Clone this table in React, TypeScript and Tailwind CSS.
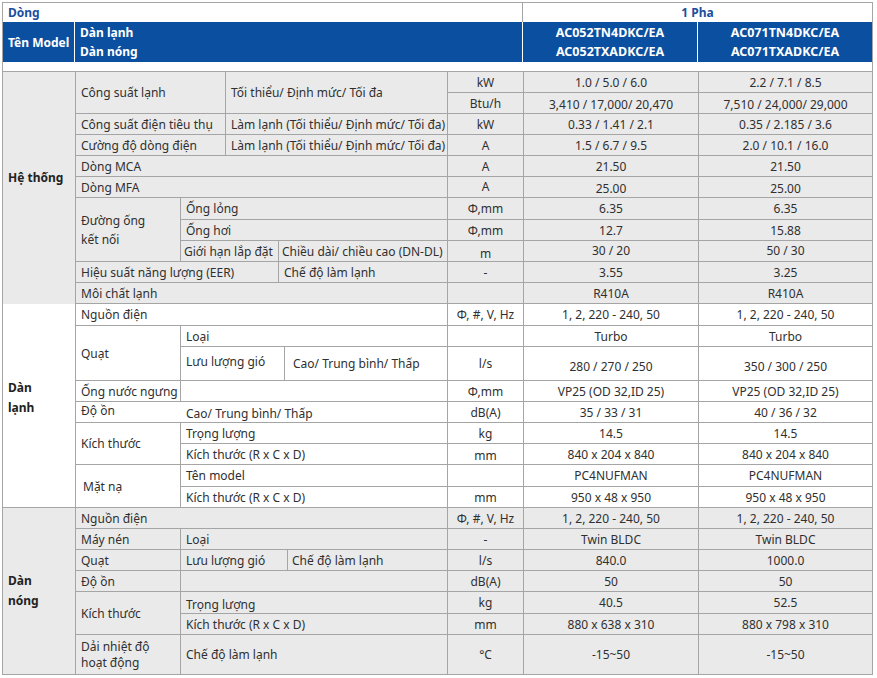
import React from "react";

type Al = "l" | "c";

function Cell({
  p,
  bg,
  a = "l",
  children,
  extra = "",
}: {
  p: string;
  bg: string;
  a?: Al;
  children?: React.ReactNode;
  extra?: string;
}) {
  return (
    <div
      className={`${p} ${bg} flex items-center ${
        a === "c" ? "justify-center text-center" : "pl-[5px] pr-[1px]"
      } ${extra} whitespace-nowrap overflow-hidden`}
    >
      {children}
    </div>
  );
}

export default function App() {
  const G = "bg-[#eaeaea]";
  const W = "bg-white";
  return (
    <div className="w-[877px] h-[678px] bg-white pt-[2px] pl-[2px] font-['Noto_Sans',sans-serif] text-[12px] leading-[15px] text-[#303030]">
      <div className="w-[871px] border border-[#a5a5a5] flex flex-col">
        {/* Dòng row */}
        <div className="flex h-[19px]">
          <div className="w-[520px] border-r border-[#a5a5a5] pl-[5px] flex items-center font-bold text-[12px] text-[#1b4f9e]">
            Dòng
          </div>
          <div className="flex-1 flex items-center justify-center font-bold text-[12px] text-[#1b4f9e]">
            1 Pha
          </div>
        </div>
        {/* Blue header */}
        <div className="flex h-[40px] bg-[#0b4fa1] text-white font-bold text-[12px] leading-[19px]">
          <div className="w-[72px] border-r border-white pl-[5px] flex items-center">Tên Model</div>
          <div className="w-[448px] border-r border-white pl-[5px] flex flex-col justify-center">
            <span>Dàn lạnh</span>
            <span>Dàn nóng</span>
          </div>
          <div className="w-[175px] border-r border-white flex flex-col justify-center items-center text-[12.5px]">
            <span>AC052TN4DKC/EA</span>
            <span>AC052TXADKC/EA</span>
          </div>
          <div className="flex-1 flex flex-col justify-center items-center text-[12.5px]">
            <span>AC071TN4DKC/EA</span>
            <span>AC071TXADKC/EA</span>
          </div>
        </div>
        {/* spacer */}
        <div className="h-[9px] bg-white" />
        {/* body grid */}
        <div className="grid gap-px bg-[#a5a5a5] border-t border-[#a5a5a5] grid-cols-[72px_104px_44px_52px_5px_2px_159px_75px_174px_173px] grid-rows-[20px_20px_20px_20px_20px_20px_21px_20px_20px_20px_20px_21px_20px_33px_20px_20px_20px_20px_21px_20px_20px_20px_20px_20px_21px_20px_39px]">
          {/* Hệ thống */}
          <Cell p="col-[1/2] row-[1/12]" bg={G} extra="font-bold text-[#222] pb-[20px] shadow-[0_1px_0_#eaeaea]">
            Hệ thống
          </Cell>
          <Cell p="col-[2/4] row-[1/3]" bg={G}>Công suất lạnh</Cell>
          <Cell p="col-[4/8] row-[1/3]" bg={G}>Tối thiểu/ Định mức/ Tối đa</Cell>
          <Cell p="col-[8/9] row-[1/2]" bg={G} a="c">kW</Cell>
          <Cell p="col-[9/10] row-[1/2]" bg={G} a="c">1.0 / 5.0 / 6.0</Cell>
          <Cell p="col-[10/11] row-[1/2]" bg={G} a="c">2.2 / 7.1 / 8.5</Cell>
          <Cell p="col-[8/9] row-[2/3]" bg={G} a="c">Btu/h</Cell>
          <Cell p="col-[9/10] row-[2/3]" bg={G} a="c" extra="pt-[3px]">3,410 / 17,000/ 20,470</Cell>
          <Cell p="col-[10/11] row-[2/3]" bg={G} a="c" extra="pt-[3px]">7,510 / 24,000/ 29,000</Cell>

          <Cell p="col-[2/4] row-[3/4]" bg={G}>Công suất điện tiêu thụ</Cell>
          <Cell p="col-[4/8] row-[3/4]" bg={G}>Làm lạnh (Tối thiểu/ Định mức/ Tối đa)</Cell>
          <Cell p="col-[8/9] row-[3/4]" bg={G} a="c">kW</Cell>
          <Cell p="col-[9/10] row-[3/4]" bg={G} a="c">0.33 / 1.41 / 2.1</Cell>
          <Cell p="col-[10/11] row-[3/4]" bg={G} a="c">0.35 / 2.185 / 3.6</Cell>

          <Cell p="col-[2/4] row-[4/5]" bg={G}>Cường độ dòng điện</Cell>
          <Cell p="col-[4/8] row-[4/5]" bg={G}>Làm lạnh (Tối thiểu/ Định mức/ Tối đa)</Cell>
          <Cell p="col-[8/9] row-[4/5]" bg={G} a="c">A</Cell>
          <Cell p="col-[9/10] row-[4/5]" bg={G} a="c">1.5 / 6.7 / 9.5</Cell>
          <Cell p="col-[10/11] row-[4/5]" bg={G} a="c">2.0 / 10.1 / 16.0</Cell>

          <Cell p="col-[2/8] row-[5/6]" bg={G}>Dòng MCA</Cell>
          <Cell p="col-[8/9] row-[5/6]" bg={G} a="c">A</Cell>
          <Cell p="col-[9/10] row-[5/6]" bg={G} a="c">21.50</Cell>
          <Cell p="col-[10/11] row-[5/6]" bg={G} a="c">21.50</Cell>

          <Cell p="col-[2/8] row-[6/7]" bg={G}>Dòng MFA</Cell>
          <Cell p="col-[8/9] row-[6/7]" bg={G} a="c" extra="pb-[2px]">A</Cell>
          <Cell p="col-[9/10] row-[6/7]" bg={G} a="c" extra="pt-[3px]">25.00</Cell>
          <Cell p="col-[10/11] row-[6/7]" bg={G} a="c" extra="pt-[3px]">25.00</Cell>

          <Cell p="col-[2/3] row-[7/10]" bg={G} extra="flex-col !items-start !justify-center leading-[19px]">
            <span>Đường ống</span>
            <span>kết nối</span>
          </Cell>
          <Cell p="col-[3/8] row-[7/8]" bg={G}>Ống lỏng</Cell>
          <Cell p="col-[8/9] row-[7/8]" bg={G} a="c">Φ,mm</Cell>
          <Cell p="col-[9/10] row-[7/8]" bg={G} a="c">6.35</Cell>
          <Cell p="col-[10/11] row-[7/8]" bg={G} a="c">6.35</Cell>

          <Cell p="col-[3/8] row-[8/9]" bg={G}>Ống hơi</Cell>
          <Cell p="col-[8/9] row-[8/9]" bg={G} a="c">Φ,mm</Cell>
          <Cell p="col-[9/10] row-[8/9]" bg={G} a="c">12.7</Cell>
          <Cell p="col-[10/11] row-[8/9]" bg={G} a="c">15.88</Cell>

          <Cell p="col-[3/5] row-[9/10]" bg={G} extra="!pl-[3px]">Giới hạn lắp đặt</Cell>
          <Cell p="col-[5/8] row-[9/10]" bg={G} extra="!pl-[3px]">Chiều dài/ chiều cao (DN-DL)</Cell>
          <Cell p="col-[8/9] row-[9/10]" bg={G} a="c" extra="pt-[4px]">m</Cell>
          <Cell p="col-[9/10] row-[9/10]" bg={G} a="c" extra="pb-[2px]">30 / 20</Cell>
          <Cell p="col-[10/11] row-[9/10]" bg={G} a="c" extra="pb-[2px]">50 / 30</Cell>

          <Cell p="col-[2/5] row-[10/11]" bg={G}>Hiệu suất năng lượng (EER)</Cell>
          <Cell p="col-[5/8] row-[10/11]" bg={G}>Chế độ làm lạnh</Cell>
          <Cell p="col-[8/9] row-[10/11]" bg={G} a="c">-</Cell>
          <Cell p="col-[9/10] row-[10/11]" bg={G} a="c">3.55</Cell>
          <Cell p="col-[10/11] row-[10/11]" bg={G} a="c">3.25</Cell>

          <Cell p="col-[2/8] row-[11/12]" bg={G}>Môi chất lạnh</Cell>
          <Cell p="col-[8/9] row-[11/12]" bg={G} a="c" />
          <Cell p="col-[9/10] row-[11/12]" bg={G} a="c">R410A</Cell>
          <Cell p="col-[10/11] row-[11/12]" bg={G} a="c">R410A</Cell>

          {/* Dàn lạnh */}
          <Cell p="col-[1/2] row-[12/21]" bg={W} extra="flex-col !items-start !justify-center font-bold text-[#222] leading-[20px] pb-[16px]">
            <span>Dàn</span>
            <span>lạnh</span>
          </Cell>
          <Cell p="col-[2/8] row-[12/13]" bg={W}>Nguồn điện</Cell>
          <Cell p="col-[8/9] row-[12/13]" bg={W} a="c">Φ, #, V, Hz</Cell>
          <Cell p="col-[9/10] row-[12/13]" bg={W} a="c">1, 2, 220 - 240, 50</Cell>
          <Cell p="col-[10/11] row-[12/13]" bg={W} a="c">1, 2, 220 - 240, 50</Cell>

          <Cell p="col-[2/3] row-[13/15]" bg={W}>Quạt</Cell>
          <Cell p="col-[3/8] row-[13/14]" bg={W}>Loại</Cell>
          <Cell p="col-[8/9] row-[13/14]" bg={W} a="c" />
          <Cell p="col-[9/10] row-[13/14]" bg={W} a="c">Turbo</Cell>
          <Cell p="col-[10/11] row-[13/14]" bg={W} a="c">Turbo</Cell>

          <Cell p="col-[3/6] row-[14/15]" bg={W} extra="pb-[5px]">Lưu lượng gió</Cell>
          <Cell p="col-[6/8] row-[14/15]" bg={W} extra="!pl-[8px]">Cao/ Trung bình/ Thấp</Cell>
          <Cell p="col-[8/9] row-[14/15]" bg={W} a="c">l/s</Cell>
          <Cell p="col-[9/10] row-[14/15]" bg={W} a="c" extra="pt-[5px]">280 / 270 / 250</Cell>
          <Cell p="col-[10/11] row-[14/15]" bg={W} a="c" extra="pt-[5px]">350 / 300 / 250</Cell>

          <Cell p="col-[2/3] row-[15/16]" bg={W}>Ống nước ngưng</Cell>
          <Cell p="col-[3/8] row-[15/16]" bg={W} />
          <Cell p="col-[8/9] row-[15/16]" bg={W} a="c">Φ,mm</Cell>
          <Cell p="col-[9/10] row-[15/16]" bg={W} a="c">VP25 (OD 32,ID 25)</Cell>
          <Cell p="col-[10/11] row-[15/16]" bg={W} a="c">VP25 (OD 32,ID 25)</Cell>

          <Cell p="col-[2/8] row-[16/17]" bg={W}>
            <span className="w-[105px] pb-[3px]">Độ ồn</span>
            <span className="pt-[2px]">Cao/ Trung bình/ Thấp</span>
          </Cell>
          <Cell p="col-[8/9] row-[16/17]" bg={W} a="c">dB(A)</Cell>
          <Cell p="col-[9/10] row-[16/17]" bg={W} a="c">35 / 33 / 31</Cell>
          <Cell p="col-[10/11] row-[16/17]" bg={W} a="c">40 / 36 / 32</Cell>

          <Cell p="col-[2/3] row-[17/19]" bg={W}>Kích thước</Cell>
          <Cell p="col-[3/8] row-[17/18]" bg={W}>Trọng lượng</Cell>
          <Cell p="col-[8/9] row-[17/18]" bg={W} a="c">kg</Cell>
          <Cell p="col-[9/10] row-[17/18]" bg={W} a="c">14.5</Cell>
          <Cell p="col-[10/11] row-[17/18]" bg={W} a="c">14.5</Cell>

          <Cell p="col-[3/8] row-[18/19]" bg={W}>Kích thước (R x C x D)</Cell>
          <Cell p="col-[8/9] row-[18/19]" bg={W} a="c" extra="pt-[3px]">mm</Cell>
          <Cell p="col-[9/10] row-[18/19]" bg={W} a="c">840 x 204 x 840</Cell>
          <Cell p="col-[10/11] row-[18/19]" bg={W} a="c">840 x 204 x 840</Cell>

          <Cell p="col-[2/3] row-[19/21]" bg={W} extra="!pl-[7px]">Mặt nạ</Cell>
          <Cell p="col-[3/8] row-[19/20]" bg={W}>Tên model</Cell>
          <Cell p="col-[8/9] row-[19/20]" bg={W} a="c" />
          <Cell p="col-[9/10] row-[19/20]" bg={W} a="c">PC4NUFMAN</Cell>
          <Cell p="col-[10/11] row-[19/20]" bg={W} a="c">PC4NUFMAN</Cell>

          <Cell p="col-[3/8] row-[20/21]" bg={W}>Kích thước (R x C x D)</Cell>
          <Cell p="col-[8/9] row-[20/21]" bg={W} a="c">mm</Cell>
          <Cell p="col-[9/10] row-[20/21]" bg={W} a="c">950 x 48 x 950</Cell>
          <Cell p="col-[10/11] row-[20/21]" bg={W} a="c">950 x 48 x 950</Cell>

          {/* Dàn nóng */}
          <Cell p="col-[1/2] row-[21/28]" bg={G} extra="flex-col !items-start !justify-center font-bold text-[#222] leading-[20px]">
            <span>Dàn</span>
            <span>nóng</span>
          </Cell>
          <Cell p="col-[2/8] row-[21/22]" bg={G}>Nguồn điện</Cell>
          <Cell p="col-[8/9] row-[21/22]" bg={G} a="c">Φ, #, V, Hz</Cell>
          <Cell p="col-[9/10] row-[21/22]" bg={G} a="c">1, 2, 220 - 240, 50</Cell>
          <Cell p="col-[10/11] row-[21/22]" bg={G} a="c">1, 2, 220 - 240, 50</Cell>

          <Cell p="col-[2/3] row-[22/23]" bg={G}>Máy nén</Cell>
          <Cell p="col-[3/8] row-[22/23]" bg={G}>Loại</Cell>
          <Cell p="col-[8/9] row-[22/23]" bg={G} a="c">-</Cell>
          <Cell p="col-[9/10] row-[22/23]" bg={G} a="c">Twin BLDC</Cell>
          <Cell p="col-[10/11] row-[22/23]" bg={G} a="c">Twin BLDC</Cell>

          <Cell p="col-[2/3] row-[23/24]" bg={G}>Quạt</Cell>
          <Cell p="col-[3/7] row-[23/24]" bg={G}>Lưu lượng gió</Cell>
          <Cell p="col-[7/8] row-[23/24]" bg={G} extra="!pl-[4px]">Chế độ làm lạnh</Cell>
          <Cell p="col-[8/9] row-[23/24]" bg={G} a="c">l/s</Cell>
          <Cell p="col-[9/10] row-[23/24]" bg={G} a="c">840.0</Cell>
          <Cell p="col-[10/11] row-[23/24]" bg={G} a="c">1000.0</Cell>

          <Cell p="col-[2/3] row-[24/25]" bg={G}>Độ ồn</Cell>
          <Cell p="col-[3/8] row-[24/25]" bg={G} />
          <Cell p="col-[8/9] row-[24/25]" bg={G} a="c">dB(A)</Cell>
          <Cell p="col-[9/10] row-[24/25]" bg={G} a="c">50</Cell>
          <Cell p="col-[10/11] row-[24/25]" bg={G} a="c">50</Cell>

          <Cell p="col-[2/3] row-[25/27]" bg={G}>Kích thước</Cell>
          <Cell p="col-[3/8] row-[25/26]" bg={G} extra="pt-[3px]">Trọng lượng</Cell>
          <Cell p="col-[8/9] row-[25/26]" bg={G} a="c">kg</Cell>
          <Cell p="col-[9/10] row-[25/26]" bg={G} a="c">40.5</Cell>
          <Cell p="col-[10/11] row-[25/26]" bg={G} a="c">52.5</Cell>

          <Cell p="col-[3/8] row-[26/27]" bg={G}>Kích thước (R x C x D)</Cell>
          <Cell p="col-[8/9] row-[26/27]" bg={G} a="c">mm</Cell>
          <Cell p="col-[9/10] row-[26/27]" bg={G} a="c">880 x 638 x 310</Cell>
          <Cell p="col-[10/11] row-[26/27]" bg={G} a="c">880 x 798 x 310</Cell>

          <Cell p="col-[2/3] row-[27/28]" bg={G} extra="flex-col !items-start !justify-center leading-[16px]">
            <span>Dải nhiệt độ</span>
            <span>hoạt động</span>
          </Cell>
          <Cell p="col-[3/8] row-[27/28]" bg={G}>Chế độ làm lạnh</Cell>
          <Cell p="col-[8/9] row-[27/28]" bg={G} a="c">°C</Cell>
          <Cell p="col-[9/10] row-[27/28]" bg={G} a="c">-15~50</Cell>
          <Cell p="col-[10/11] row-[27/28]" bg={G} a="c">-15~50</Cell>
        </div>
      </div>
    </div>
  );
}
